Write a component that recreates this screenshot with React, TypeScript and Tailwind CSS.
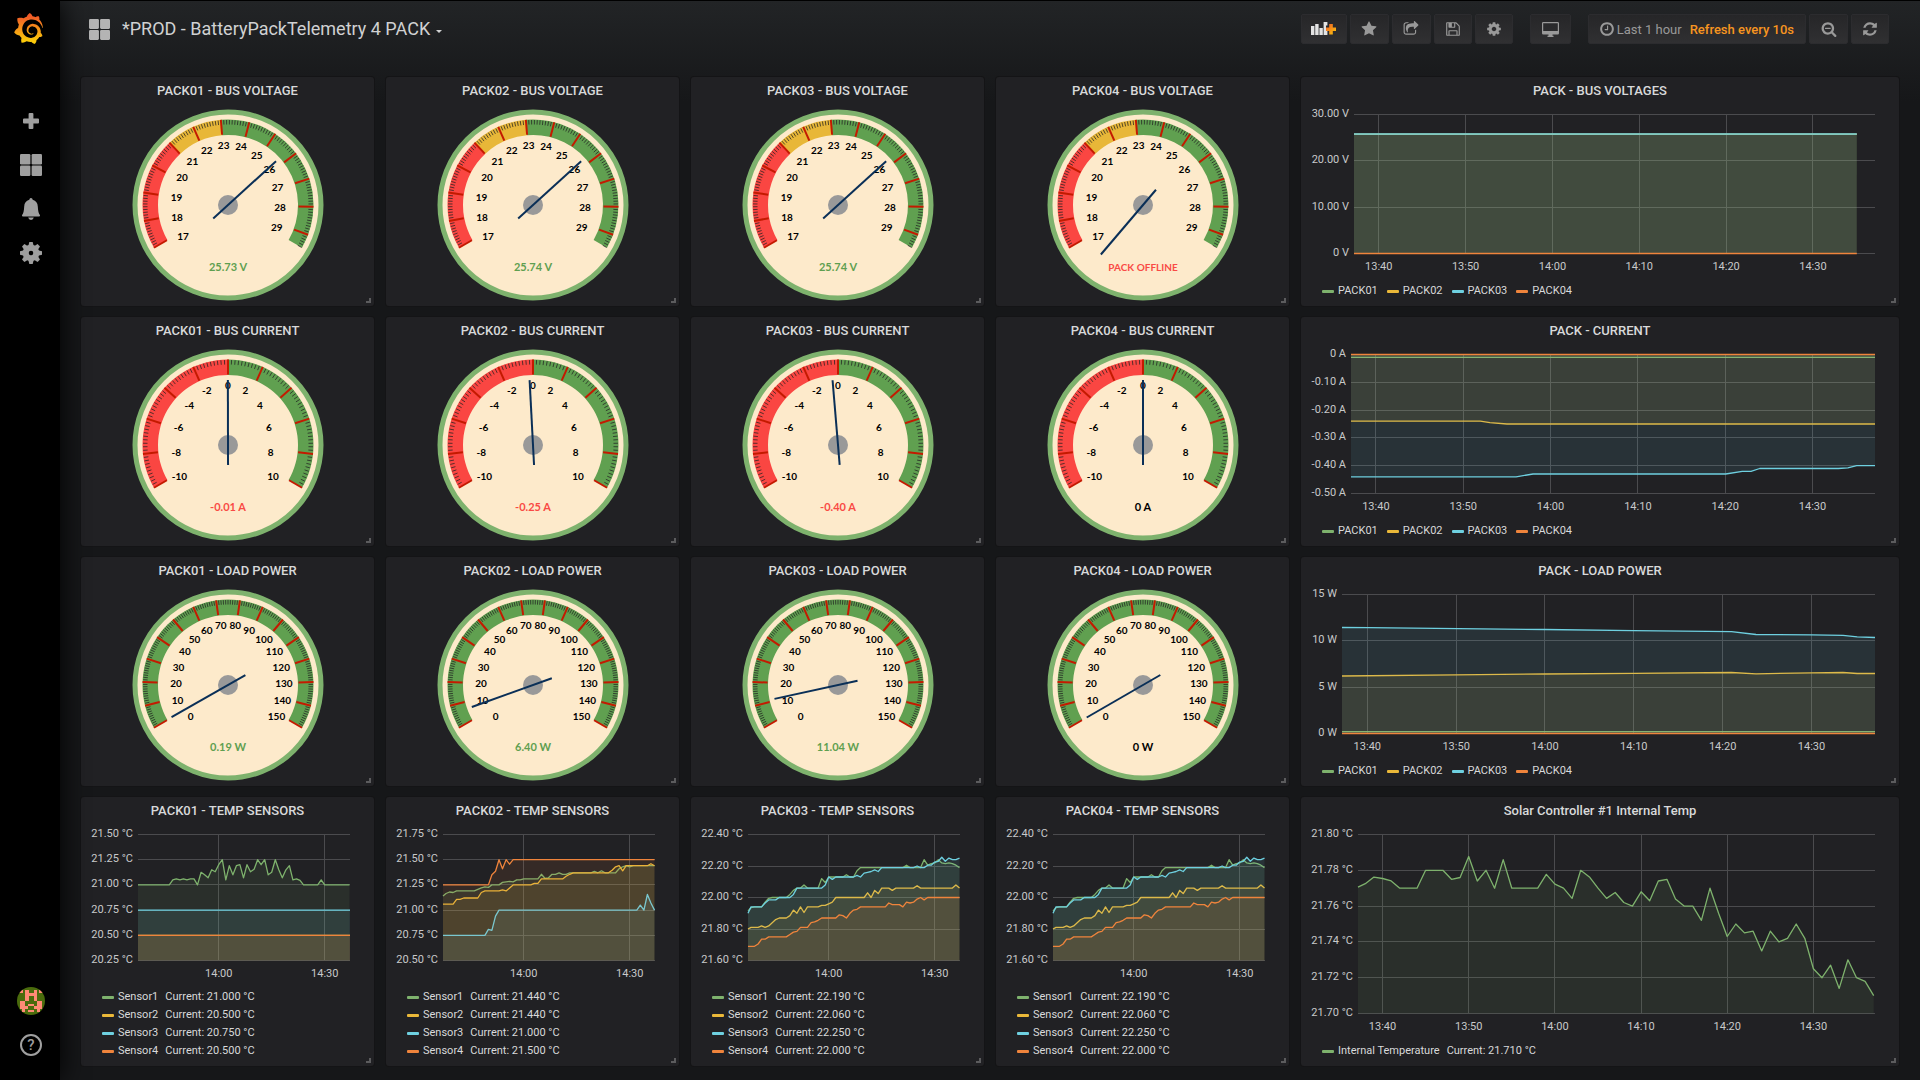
import React from "react";
import { SiGrafana } from "react-icons/si";

const GREEN = "#7eb26d";
const YELLOW = "#eab839";
const CYAN = "#6ed0e0";
const ORANGE = "#ef843c";
const COLORS = [GREEN, YELLOW, CYAN, ORANGE];

/* ---------- icons ---------- */

type IconProps = { className?: string };

const PATHS = {
  star: "M1728 647q0 22-26 48l-363 354 86 500q1 7 1 20 0 21-10.5 35.5t-30.5 14.5q-19 0-40-12l-449-236-449 236q-22 12-40 12-21 0-31.5-14.5t-10.5-35.5q0-6 2-20l86-500-364-354q-25-27-25-48 0-37 56-46l502-73 225-455q19-41 49-41t49 41l225 455 502 73q56 9 56 46z",
  share:
    "M1472 989v259q0 119-84.5 203.5t-203.5 84.5h-832q-119 0-203.5-84.5t-84.5-203.5v-832q0-119 84.5-203.5t203.5-84.5h255q13 0 22.5 9.5t9.5 22.5q0 27-26 32-77 26-133 60-10 4-16 4h-112q-66 0-113 47t-47 113v832q0 66 47 113t113 47h832q66 0 113-47t47-113v-214q0-19 18-29 28-13 54-37 16-16 35-8 21 9 21 29zm237-496l-384 384q-18 19-45 19-12 0-25-5-39-17-39-59v-192h-160q-323 0-438 131-119 137-74 473 3 23-20 34-8 2-12 2-16 0-26-13-10-14-21-31t-39.5-68.5-49.5-99.5-38.5-114-17.5-122q0-49 3.5-91t14-90 28-88 47-81.5 68.5-74 94.5-61.5 124.5-48.5 159.5-30.5 196.5-11h160v-192q0-42 39-59 13-5 25-5 26 0 45 19l384 384q19 19 19 45t-19 45z",
  save: "M512 1536h768v-384h-768v384zm896 0h128v-896q0-14-10-38.5t-20-34.5l-281-281q-10-10-34-20t-39-10v416q0 40-28 68t-68 28h-576q-40 0-68-28t-28-68v-416h-128v1280h128v-416q0-40 28-68t68-28h832q40 0 68 28t28 68v416zm-384-928v-320q0-13-9.5-22.5t-22.5-9.5h-192q-13 0-22.5 9.5t-9.5 22.5v320q0 13 9.5 22.5t22.5 9.5h192q13 0 22.5-9.5t9.5-22.5zm640 32v928q0 40-28 68t-68 28h-1344q-40 0-68-28t-28-68v-1344q0-40 28-68t68-28h928q40 0 88 20t76 48l280 280q28 28 48 76t20 88z",
  cog: "M1152 896q0-106-75-181t-181-75-181 75-75 181 75 181 181 75 181-75 75-181zm512-109v222q0 12-8 23t-20 13l-185 28q-19 54-39 91 35 50 107 138 10 12 10 25t-9 23q-27 37-99 108t-94 71q-12 0-26-9l-138-108q-44 23-91 38-16 136-29 186-7 28-36 28h-222q-14 0-24.5-8.5t-11.5-21.5l-28-184q-49-16-90-37l-141 107q-10 9-25 9-14 0-25-11-126-114-165-168-7-10-7-23 0-12 8-23 15-21 51-66.5t54-70.5q-27-50-41-99l-183-27q-13-2-21-12.5t-8-23.5v-222q0-12 8-23t19-13l186-28q14-46 39-92-40-57-107-138-10-12-10-24 0-10 9-23 26-36 98.5-107.5t94.5-71.5q13 0 26 10l138 107q44-23 91-38 16-136 29-186 7-28 36-28h222q14 0 24.5 8.5t11.5 21.5l28 184q49 16 90 37l142-107q9-9 24-9 13 0 25 10 129 119 165 170 7 8 7 22 0 12-8 23-15 21-51 66.5t-54 70.5q26 50 41 98l183 28q13 2 21 12.5t8 23.5z",
  clock:
    "M1024 544v448q0 14-9 23t-23 9h-320q-14 0-23-9t-9-23v-64q0-14 9-23t23-9h224v-352q0-14 9-23t23-9h64q14 0 23 9t9 23zm416 352q0-148-73-273t-198-198-273-73-273 73-198 198-73 273 73 273 198 198 273 73 273-73 198-198 73-273zm224 0q0 209-103 385.5t-279.5 279.5-385.5 103-385.5-103-279.5-279.5-103-385.5 103-385.5 279.5-279.5 385.5-103 385.5 103 279.5 279.5 103 385.5z",
  zoomOut:
    "M1088 800v64q0 13-9.5 22.5t-22.5 9.5h-576q-13 0-22.5-9.5t-9.5-22.5v-64q0-13 9.5-22.5t22.5-9.5h576q13 0 22.5 9.5t9.5 22.5zm128 32q0-185-131.5-316.5t-316.5-131.5-316.5 131.5-131.5 316.5 131.5 316.5 316.5 131.5 316.5-131.5 131.5-316.5zm512 832q0 53-37.5 90.5t-90.5 37.5q-54 0-90-38l-343-342q-179 124-399 124-143 0-273.5-55.5t-225-150-150-225-55.5-273.5 55.5-273.5 150-225 225-150 273.5-55.5 273.5 55.5 225 150 150 225 55.5 273.5q0 220-124 399l343 343q37 37 37 90z",
  refresh:
    "M1639 1056q0 5-1 7-64 268-268 434.5t-478 166.5q-146 0-282.5-55t-243.5-157l-129 129q-19 19-45 19t-45-19-19-45v-448q0-26 19-45t45-19h448q26 0 45 19t19 45-19 45l-137 137q71 66 161 102t187 36q134 0 250-65t186-179q11-17 53-117 8-23 30-23h192q13 0 22.5 9.5t9.5 22.5zm25-800v448q0 26-19 45t-45 19h-448q-26 0-45-19t-19-45 19-45l138-138q-148-137-349-137-134 0-250 65t-186 179q-11 17-53 117-8 23-30 23h-199q-13 0-22.5-9.5t-9.5-22.5v-7q65-268 270-434.5t480-166.5q146 0 284 55.5t245 156.5l130-129q19-19 45-19t45 19 19 45z",
};

function Glyph({ name, className }: { name: keyof typeof PATHS; className?: string }) {
  return (
    <svg viewBox="0 0 1792 1792" fill="currentColor" className={className} aria-hidden="true">
      <path d={PATHS[name]} />
    </svg>
  );
}

function Squares({ className }: IconProps) {
  return (
    <svg viewBox="0 0 22 22" fill="currentColor" className={className} aria-hidden="true">
      <rect x="0" y="0" width="10.4" height="10.4" rx="1.2" />
      <rect x="11.6" y="0" width="10.4" height="10.4" rx="1.2" />
      <rect x="0" y="11.6" width="10.4" height="10.4" rx="1.2" />
      <rect x="11.6" y="11.6" width="10.4" height="10.4" rx="1.2" />
    </svg>
  );
}

function Plus({ className }: IconProps) {
  return (
    <svg viewBox="0 0 16 16" fill="currentColor" className={className} aria-hidden="true">
      <path d="M6.6 0h2.8q1 0 1 1v4.6H15q1 0 1 1v2.8q0 1-1 1h-4.6V15q0 1-1 1H6.6q-1 0-1-1v-4.6H1q-1 0-1-1V6.6q0-1 1-1h4.6V1q0-1 1-1z" />
    </svg>
  );
}

function Bell({ className }: IconProps) {
  return (
    <svg viewBox="0 0 18 22" fill="currentColor" className={className} aria-hidden="true">
      <path d="M9 0q1.500 0 1.700 1.700C14 2.500 15.600 5 15.800 8.500c.2 4.500.9 7 2.100 8.600.3.700 0 1.400-.8 1.400H.9c-.8 0-1.100-.7-.8-1.400C1.300 15.500 2 13 2.200 8.500 2.400 5 4 2.500 7.300 1.700 7.500 0 9 0 9 0z" />
      <path d="M6.200 19.600h5.600Q11.300 22 9 22t-2.800-2.400z" />
    </svg>
  );
}

function Gear({ className }: IconProps) {
  const teeth = [0, 45, 90, 135, 180, 225, 270, 315];
  return (
    <svg viewBox="-11 -11 22 22" className={className} aria-hidden="true">
      {teeth.map((a) => (
        <path key={a} d="M-2.900 -6L-1.700 -11H1.700L2.900 -6z" fill="currentColor" transform={`rotate(${a})`} />
      ))}
      <circle r="5.300" fill="none" stroke="currentColor" strokeWidth="6" />
    </svg>
  );
}

function Monitor({ className }: IconProps) {
  return (
    <svg viewBox="0 0 17 15" fill="currentColor" className={className} aria-hidden="true">
      <path
        fillRule="evenodd"
        d="M1.300 0h14.400Q17 0 17 1.300v9.900q0 1.300-1.300 1.300H1.300Q0 12.500 0 11.200V1.300Q0 0 1.300 0zM1.200 1.200v7.800h14.600v-7.800z"
      />
      <path d="M6.500 12h4v1.800h1V15h-6v-1.200h1z" />
    </svg>
  );
}

function AddPanel({ className }: IconProps) {
  return (
    <svg viewBox="0 0 25 15" className={className} aria-hidden="true">
      <g fill="#e3e3e3">
        <rect x="0" y="4" width="3.400" height="9" />
        <rect x="4.200" y="2" width="3.400" height="11" />
        <rect x="8.400" y="6" width="3.400" height="7" />
        <path d="M12.600 0h3.800v3.600h-1.400v5.400h1.400V13h-3.800z" />
      </g>
      <path d="M18.200 2h3.600v3.400H25V9h-3.200v3.400h-3.600V9H15V5.400h3.200z" fill="url(#plusGradient)" />
      <defs>
        <linearGradient id="plusGradient" x1="0" y1="0" x2="1" y2="1">
          <stop offset="0" stopColor="#f05a28" />
          <stop offset="1" stopColor="#fbca0a" />
        </linearGradient>
      </defs>
    </svg>
  );
}

function Avatar() {
  return (
    <svg viewBox="0 0 28 28" className="size-7 rounded-full" aria-hidden="true">
      <rect width="28" height="28" fill="#4a6b0c" />
      <g fill="#ff8a75">
        <rect x="8" y="3" width="4" height="11" />
        <rect x="17" y="3" width="3" height="11" />
        <rect x="12" y="6" width="5" height="3" />
        <rect x="2" y="3" width="4" height="3" />
        <rect x="22" y="3" width="4" height="3" />
        <rect x="3" y="14" width="5" height="8" />
        <rect x="20" y="14" width="5" height="8" />
        <rect x="8" y="19" width="3" height="3" />
        <rect x="17" y="19" width="3" height="3" />
        <rect x="11" y="17" width="6" height="2" />
        <rect x="5" y="22" width="3" height="3" />
        <rect x="20" y="22" width="3" height="3" />
        <rect x="11" y="23" width="6" height="2" />
      </g>
    </svg>
  );
}

/* ---------- shell ---------- */

function SideItem({ label, children }: { label: string; children: React.ReactNode }) {
  return (
    <button type="button" aria-label={label} className="flex h-11 w-full items-center justify-center pl-0.5 text-[#9f9f9f]">
      {children}
    </button>
  );
}

function Sidebar() {
  return (
    <nav className="z-10 flex w-15 shrink-0 flex-col bg-black pb-[13px] shadow-[0_0_28px_#000]">
      <a href="#home" aria-label="Home" className="flex h-14 items-center justify-center pr-1">
        <svg width="0" height="0" className="absolute" aria-hidden="true">
          <linearGradient id="logoGradient" x1="0" y1="0" x2="0" y2="1">
            <stop offset="0.1" stopColor="#f05a28" />
            <stop offset="0.9" stopColor="#fbca0a" />
          </linearGradient>
        </svg>
        <SiGrafana size={31} fill="url(#logoGradient)" />
      </a>
      <div className="mt-[43px] flex flex-col">
        <SideItem label="Create"><Plus className="size-4" /></SideItem>
        <SideItem label="Dashboards"><Squares className="size-[22px]" /></SideItem>
        <SideItem label="Alerting"><Bell className="h-[22px] w-[18px]" /></SideItem>
        <SideItem label="Configuration"><Gear className="size-[22px]" /></SideItem>
      </div>
      <div className="mt-auto flex flex-col">
        <SideItem label="Profile"><Avatar /></SideItem>
        <SideItem label="Help">
          <span className="flex size-[22px] items-center justify-center rounded-full border-2 border-[#a0a0a0] font-[Roboto] text-[15px] leading-none font-medium">
            ?
          </span>
        </SideItem>
      </div>
    </nav>
  );
}

function NavButton({ label, className, children }: { label: string; className: string; children: React.ReactNode }) {
  return (
    <button
      type="button"
      aria-label={label}
      className={`flex h-[30px] items-center justify-center rounded-[2px] border border-[#2c2c2f] bg-linear-to-b from-[#262628] to-[#303032] text-[#999] ${className}`}
    >
      {children}
    </button>
  );
}

function Header() {
  return (
    <header className="flex h-14 items-center pr-[31px] pl-[29px]">
      <button type="button" className="flex items-center text-lg text-[#d0d1d2]">
        <Squares className="mr-3 size-[21px] text-[#b4b4b4]" />
        *PROD - BatteryPackTelemetry 4 PACK
        <span className="mt-1 ml-1.5 border-x-[3px] border-t-[3px] border-x-transparent border-t-[#d0d1d2]" />
      </button>
      <div className="ml-auto flex gap-[3px]">
        <NavButton label="Add panel" className="w-[46px]"><AddPanel className="h-[15px] w-[25px]" /></NavButton>
        <NavButton label="Mark as favorite" className="w-[39px]"><Glyph name="star" className="size-4" /></NavButton>
        <NavButton label="Share dashboard" className="w-[39px]"><Glyph name="share" className="size-4" /></NavButton>
        <NavButton label="Save dashboard" className="w-[38px]"><Glyph name="save" className="size-4" /></NavButton>
        <NavButton label="Settings" className="w-[38px]"><Glyph name="cog" className="size-4" /></NavButton>
        <NavButton label="Cycle view mode" className="mx-3.5 w-[41px]"><Monitor className="h-[15px] w-[17px]" /></NavButton>
        <NavButton label="Time range" className="pr-[11px] pl-2.5 text-[13px]">
          <Glyph name="clock" className="mr-0.5 size-4" />
          <span className="pt-0.5">Last 1 hour</span>
          <span className="pt-0.5 pl-2 font-medium text-[#f79520]">Refresh every 10s</span>
        </NavButton>
        <NavButton label="Zoom out" className="w-[39px]"><Glyph name="zoomOut" className="size-4" /></NavButton>
        <NavButton label="Refresh" className="w-[38px]"><Glyph name="refresh" className="size-4" /></NavButton>
      </div>
    </header>
  );
}

function Panel({ title, wide, children }: { title: string; wide?: boolean; children: React.ReactNode }) {
  return (
    <section
      className={`relative rounded-[3px] bg-[#212124] shadow-[0_0_0_1px_#141416] ${wide ? "col-span-2 pb-1.5" : "pb-px"}`}
    >
      <h2 className="h-7 text-center text-[13px] leading-7 font-medium text-[#d8d9da]">{title}</h2>
      {children}
      <span className="absolute right-[3px] bottom-[3px] size-[5px] border-r-2 border-b-2 border-[#5c5c5e]" />
    </section>
  );
}

/* ---------- gauge ---------- */

const polar = (r: number, deg: number): [number, number] => {
  const a = (deg * Math.PI) / 180;
  return [r * Math.sin(a), -r * Math.cos(a)];
};

function band(from: number, to: number, r0 = 70, r1 = 85.5) {
  const [ax, ay] = polar(r1, from);
  const [bx, by] = polar(r1, to);
  const [cx, cy] = polar(r0, to);
  const [dx, dy] = polar(r0, from);
  const large = to - from > 180 ? 1 : 0;
  return `M${ax} ${ay}A${r1} ${r1} 0 ${large} 1 ${bx} ${by}L${cx} ${cy}A${r0} ${r0} 0 ${large} 0 ${dx} ${dy}Z`;
}

type GaugeSpec = {
  min: number;
  max: number;
  step: number;
  zones: [number, number, string][];
};

const Z_RED = "#fa4642";
const Z_YELLOW = "#e8b738";
const Z_GREEN = "#60a050";

const VOLTAGE: GaugeSpec = {
  min: 17,
  max: 29.5,
  step: 1,
  zones: [[17, 21, Z_RED], [21, 23, Z_YELLOW], [23, 29.5, Z_GREEN]],
};
const CURRENT: GaugeSpec = { min: -10, max: 10, step: 2, zones: [[-10, 0, Z_RED], [0, 10, Z_GREEN]] };
const POWER: GaugeSpec = { min: 0, max: 150, step: 10, zones: [[0, 150, Z_GREEN]] };

/* labels sit closer to the hub the shorter they are */
const LABEL_RX = [0, 43, 52, 56];

function Gauge({ spec, value, text, color }: { spec: GaugeSpec; value: number; text: string; color: string }) {
  const angle = (v: number) => ((v - spec.min) / (spec.max - spec.min)) * 240 - 120;
  const majors: number[] = [];
  for (let v = spec.min; v <= spec.max; v += spec.step) majors.push(v);
  const minors: number[] = [];
  const count = Math.round(((spec.max - spec.min) / spec.step) * 10);
  for (let i = 0; i <= count; i++) if (i % 10) minors.push(spec.min + (i * spec.step) / 10);
  const [nx, ny] = polar(65, angle(value));
  const [tx, ty] = polar(-20, angle(value));

  return (
    <svg viewBox="-100 -100 200 200" className="mx-auto block h-[200px] w-[200px]" role="img" aria-label={text}>
      <circle r="93" fill="#fdeacb" stroke="#7eb26d" strokeWidth="5" />
      {spec.zones.map(([a, b, c]) => (
        <path key={a} d={band(angle(a), angle(b))} fill={c} />
      ))}
      {minors.map((v) => {
        const [x1, y1] = polar(80.5, angle(v));
        const [x2, y2] = polar(85, angle(v));
        return <line key={v} x1={x1} y1={y1} x2={x2} y2={y2} stroke="#222" strokeOpacity="0.75" strokeWidth="1" />;
      })}
      {majors.map((v) => {
        const [x1, y1] = polar(70.5, angle(v));
        const [x2, y2] = polar(85.5, angle(v));
        return <line key={v} x1={x1} y1={y1} x2={x2} y2={y2} stroke="#c41a00" strokeWidth="2" />;
      })}
      <g className="font-[Lato] text-[10px] font-bold" fill="#000" textAnchor="middle">
        {majors.map((v) => {
          const [sx, sy] = polar(1, angle(v));
          const label = String(v);
          return (
            <text key={v} x={sx * LABEL_RX[label.length]} y={sy * 61 + 4.5}>
              {label}
            </text>
          );
        })}
      </g>
      <circle r="10" fill="#999" />
      <line x1={tx} y1={ty} x2={nx} y2={ny} stroke="#0a2f57" strokeWidth="2" />
      <text
        y="66"
        textAnchor="middle"
        fill={color}
        className={`font-[Lato] font-bold ${text.length > 8 ? "text-[10px]" : "text-[11px]"}`}
      >
        {text}
      </text>
    </svg>
  );
}

/* ---------- charts ---------- */

type Pt = [number, number]; // minutes since the left edge, value

/* one sample a minute; the first minute is cut by the left edge */
const perMinute = (values: number[]): Pt[] => values.map((v, k) => [Math.max(0, k - 0.15), v]);
const rep = (v: number, n: number): number[] => Array.from({ length: n }, () => v);
const flat = (v: number, end = 60): Pt[] => [[0, v], [end, v]];

type ChartProps = {
  width: number;
  height: number;
  left: number;
  right: number;
  bottom: number;
  yMin: number;
  yMax: number;
  yTicks: string[]; // from top to bottom
  xTicks: [number, string][];
  series: Pt[][];
};

const PLOT_TOP = 9;

function Chart({ width, height, left, right, bottom, yMin, yMax, yTicks, xTicks, series }: ChartProps) {
  const X = (m: number) => left + (m / 60) * (right - left);
  const Y = (v: number) => bottom + 0.5 - ((v - yMin) / (yMax - yMin)) * (bottom - PLOT_TOP);
  const base = Y(Math.min(Math.max(0, yMin), yMax));
  return (
    <svg viewBox={`0 0 ${width} ${height}`} className="block h-auto w-full" role="img">
      <g stroke="#4b4b4e" strokeWidth="1">
        {yTicks.map((t, i) => {
          const y = Math.round(PLOT_TOP + (i / (yTicks.length - 1)) * (bottom - PLOT_TOP)) + 0.5;
          return <line key={t} x1={left} x2={right} y1={y} y2={y} />;
        })}
        {xTicks.map(([m, t]) => {
          const x = Math.floor(X(m)) + 0.5;
          return <line key={t} x1={x} x2={x} y1={PLOT_TOP} y2={bottom} />;
        })}
      </g>
      {series.map((pts, i) => {
        const line = pts.map(([m, v]) => `${X(m).toFixed(1)} ${Y(v).toFixed(1)}`).join("L");
        return (
          <g key={i}>
            <path d={`M${X(pts[0][0])} ${base}L${line}L${X(pts[pts.length - 1][0])} ${base}Z`} fill={COLORS[i]} fillOpacity="0.1" />
            <path d={`M${line}`} fill="none" stroke={COLORS[i]} strokeWidth="1.3" strokeLinejoin="round" />
          </g>
        );
      })}
      <g fill="#c8c9ca" className="text-[11px]">
        {yTicks.map((t, i) => (
          <text key={t} x={left - 5} y={PLOT_TOP + (i / (yTicks.length - 1)) * (bottom - PLOT_TOP) + 3} textAnchor="end">
            {t}
          </text>
        ))}
        {xTicks.map(([m, t]) => (
          <text key={t} x={X(m)} y={bottom + 17} textAnchor="middle">
            {t}
          </text>
        ))}
      </g>
    </svg>
  );
}

const SWATCH = ["bg-[#7eb26d]", "bg-[#eab839]", "bg-[#6ed0e0]", "bg-[#ef843c]"];

function Legend({ items, stacked }: { items: [string, string?][]; stacked?: boolean }) {
  return (
    <ul className={`flex pl-[21px] text-[11px] leading-[18px] text-[#d8d9da] ${stacked ? "flex-col" : "gap-[9px]"}`}>
      {items.map(([name, current], i) => (
        <li key={name} className="flex items-center whitespace-nowrap">
          <span className={`mr-1 h-[3px] w-3 rounded-[1px] ${SWATCH[i]}`} />
          {name}
          {current && <span className="pl-[7px]">Current: {current} °C</span>}
        </li>
      ))}
    </ul>
  );
}

const X_WIDE: [number, string][] = [
  [2.85, "13:40"], [12.85, "13:50"], [22.85, "14:00"], [32.85, "14:10"], [42.85, "14:20"], [52.85, "14:30"],
];
const X_NARROW: [number, string][] = [[22.85, "14:00"], [52.85, "14:30"]];
const PACK_NAMES: [string][] = [["PACK01"], ["PACK02"], ["PACK03"], ["PACK04"]];

const CURRENT_SERIES: Pt[][] = [
  flat(-0.01),
  [[0, -0.24], [14.8, -0.24], [15.9, -0.245], [17.85, -0.25], [60, -0.25]],
  [
    [0, -0.44], [18.9, -0.44], [20.85, -0.43], [42.9, -0.43], [44.8, -0.42], [45.8, -0.42],
    [46.8, -0.41], [55.8, -0.41], [56.9, -0.408], [57.9, -0.4], [60, -0.4],
  ],
  flat(0),
];

const POWER_SERIES: Pt[][] = [
  flat(0.2),
  [[0, 6.2], [12.8, 6.33], [22.85, 6.42], [32.85, 6.5], [43.85, 6.58], [46.6, 6.44], [52.9, 6.55], [56.4, 6.58], [58, 6.47], [60, 6.47]],
  [[0, 11.44], [3, 11.42], [22.85, 11.22], [32.85, 11.1], [43.85, 11], [46.6, 10.68], [52.9, 10.65], [56.4, 10.6], [58, 10.43], [60, 10.36]],
  flat(0),
];

const TEMP_1: Pt[][] = [
  perMinute([
    ...rep(21, 10), 21.05, 21.06, 21.05, 21.06, 21.05, 21.06, 21.06, 21, 21.125, 21.1, 21.07, 21.15, 21.13, 21.2, 21.25,
    21.05, 21.19, 21.1, 21.19, 21.2, 21.07, 21.2, 21.13, 21.155, 21.25, 21.2, 21.25, 21.1, 21.125, 21.25, 21.15, 21.07,
    21.15, 21.19, 21.05, 21.06, 21.045, ...rep(21, 5), 21.05, ...rep(21, 8),
  ]),
  flat(20.5),
  flat(20.75),
  flat(20.5),
];

const TEMP_2: Pt[][] = [
  perMinute([
    21.14, 21.165, 21.18, 21.175, ...rep(21.19, 6), 21.205, 21.22, 21.23, 21.225, ...rep(21.25, 3), 21.275, 21.28, 21.285,
    21.28, 21.3, 21.3, ...rep(21.31, 5), 21.355, 21.315, 21.32, 21.355, 21.355, 21.37, 21.355, 21.355, ...rep(21.37, 7),
    21.385, 21.37, 21.39, ...rep(21.37, 4), 21.41, 21.43, 21.44, 21.43, ...rep(21.44, 7),
  ]),
  perMinute([
    ...rep(21.06, 4), 21.107, 21.107, ...rep(21.12, 5), 21.175, ...rep(21.19, 5), 21.2, 21.19, 21.22, ...rep(21.25, 6),
    21.265, 21.265, ...rep(21.31, 7), 21.335, 21.355, ...rep(21.37, 11), 21.395, 21.43, 21.44, 21.39, ...rep(21.44, 7),
    21.46, 21.44,
  ]),
  perMinute([...rep(20.75, 13), 20.81, 20.8, 20.94, ...rep(21, 40), 21.05, 21, 21.155, 21.07, 21]),
  perMinute([...rep(21.25, 14), 21.35, 21.385, 21.5, 21.41, 21.5, 21.455, ...rep(21.5, 41)]),
];

const TEMP_3: Pt[][] = [
  perMinute([
    21.915, 21.935, ...rep(21.94, 3), 21.97, 21.995, ...rep(22, 5), 22.02, 22.045, 22.06, 22.06, 22.08, ...rep(22.06, 4),
    22.12, 22.095, ...rep(22.13, 5), 22.145, 22.13, 22.13, 22.17, ...rep(22.19, 13), 22.205, ...rep(22.19, 4), 22.24,
    22.205, 22.215, 22.22, 22.24, 22.22, 22.215, 22.22, 22.215, 22.205, 22.19,
  ]),
  perMinute([
    21.8, 21.81, 21.81, 21.81, 21.82, 21.81, 21.82, 21.84, 21.86, ...rep(21.87, 3), 21.885, 21.92, 21.9, 21.94, 21.905,
    ...rep(21.94, 4), 21.95, 21.95, 21.96, 21.97, ...rep(22, 9), 22.03, 22, 22.045, 22.025, ...rep(22.06, 3), 22.045,
    ...rep(22.06, 6), 22.075, ...rep(22.06, 10), 22.08, 22.06,
  ]),
  perMinute([
    21.9, ...rep(21.94, 4), 21.965, 21.985, 21.985, 21.985, ...rep(22, 4), 22.02, ...rep(22.06, 8), 22.08, 22.13, 22.115,
    ...rep(22.13, 6), 22.14, 22.13, 22.155, 22.16, 22.165, 22.175, 22.165, ...rep(22.19, 10), 22.2, 22.19, 22.19, 22.205,
    22.205, 22.225, 22.23, 22.255, 22.23, 22.25, 22.24, 22.24, 22.25,
  ]),
  perMinute([
    ...rep(21.69, 3), 21.705, 21.735, 21.735, ...rep(21.75, 6), 21.765, 21.78, 21.785, ...rep(21.81, 3), 21.84, 21.845,
    21.855, ...rep(21.87, 5), 21.89, 21.885, 21.87, 21.9, 21.92, 21.925, ...rep(21.94, 8), 21.965, 21.955, 21.955,
    21.955, 21.94, 21.97, 21.965, 21.97, 21.99, 22, 21.985, ...rep(22, 10),
  ]),
];

const SOLAR: Pt[][] = [
  perMinute([
    21.7706, 21.7725, 21.7762, 21.7754, 21.7741, ...rep(21.77, 3), ...rep(21.78, 3), 21.775, 21.776, 21.7877, 21.774,
    21.78, 21.77, 21.786, ...rep(21.77, 4), 21.7777, 21.7723, 21.77, 21.7643, 21.78, 21.7763, 21.77, 21.7643, 21.7676,
    21.762, 21.76, 21.768, 21.763, 21.774, 21.775, 21.764, 21.76, 21.76, 21.752, 21.77, 21.756, 21.743, 21.75, 21.745,
    21.746, 21.735, 21.746, 21.74, 21.742, 21.75, 21.742, 21.725, 21.72, 21.727, 21.714, 21.73, 21.72, 21.718, 21.71,
  ]),
];

type TempSpec = { yTicks: string[]; yMin: number; yMax: number; series: Pt[][]; current: string[] };
const TICKS_22 = ["22.40 °C", "22.20 °C", "22.00 °C", "21.80 °C", "21.60 °C"];
const CURRENT_22 = ["22.190", "22.060", "22.250", "22.000"];
const TEMPS: TempSpec[] = [
  {
    yTicks: ["21.50 °C", "21.25 °C", "21.00 °C", "20.75 °C", "20.50 °C", "20.25 °C"],
    yMin: 20.25, yMax: 21.5, series: TEMP_1, current: ["21.000", "20.500", "20.750", "20.500"],
  },
  {
    yTicks: ["21.75 °C", "21.50 °C", "21.25 °C", "21.00 °C", "20.75 °C", "20.50 °C"],
    yMin: 20.5, yMax: 21.75, series: TEMP_2, current: ["21.440", "21.440", "21.000", "21.500"],
  },
  { yTicks: TICKS_22, yMin: 21.6, yMax: 22.4, series: TEMP_3, current: CURRENT_22 },
  { yTicks: TICKS_22, yMin: 21.6, yMax: 22.4, series: TEMP_3, current: CURRENT_22 },
];

/* ---------- page ---------- */

const T_GREEN = "#5f9f50";
const T_RED = "#f94a45";

const VOLTS: [number, string, string][] = [
  [25.73, "25.73 V", T_GREEN], [25.74, "25.74 V", T_GREEN], [25.74, "25.74 V", T_GREEN], [15.98, "PACK OFFLINE", T_RED],
];
const AMPS: [number, string, string][] = [
  [-0.01, "-0.01 A", T_RED], [-0.25, "-0.25 A", T_RED], [-0.4, "-0.40 A", T_RED], [0, "0 A", "#000"],
];
const WATTS: [number, string, string][] = [
  [0.19, "0.19 W", T_GREEN], [6.4, "6.40 W", T_GREEN], [11.04, "11.04 W", T_GREEN], [0, "0 W", "#000"],
];

function GaugeRow({ name, spec, readings }: { name: string; spec: GaugeSpec; readings: [number, string, string][] }) {
  return (
    <>
      {readings.map(([value, text, color], i) => (
        <Panel key={i} title={`PACK0${i + 1} - ${name}`}>
          <Gauge spec={spec} value={value} text={text} color={color} />
        </Panel>
      ))}
    </>
  );
}

export default function App() {
  return (
    <div className="flex min-h-screen bg-[#161719] font-[Roboto,sans-serif] text-[#d8d9da]">
      <Sidebar />
      <main className="min-w-0 flex-1 border-t border-black bg-linear-to-b from-[#222426] to-[#161719] to-[100px]">
        <Header />
        <div className="grid grid-cols-6 gap-x-3 gap-y-[11px] px-[21px] pt-5 pb-3">
          <GaugeRow name="BUS VOLTAGE" spec={VOLTAGE} readings={VOLTS} />
          <Panel title="PACK - BUS VOLTAGES" wide>
            <Chart
              width={598} height={177} left={53} right={574} bottom={148} yMin={0} yMax={30}
              yTicks={["30.00 V", "20.00 V", "10.00 V", "0 V"]} xTicks={X_WIDE}
              series={[flat(25.7, 57.9), flat(25.74, 57.9), flat(25.8, 57.9), flat(0, 57.9)]}
            />
            <Legend items={PACK_NAMES} />
          </Panel>

          <GaugeRow name="BUS CURRENT" spec={CURRENT} readings={AMPS} />
          <Panel title="PACK - CURRENT" wide>
            <Chart
              width={598} height={177} left={50} right={574} bottom={148} yMin={-0.5} yMax={0}
              yTicks={["0 A", "-0.10 A", "-0.20 A", "-0.30 A", "-0.40 A", "-0.50 A"]} xTicks={X_WIDE}
              series={CURRENT_SERIES}
            />
            <Legend items={PACK_NAMES} />
          </Panel>

          <GaugeRow name="LOAD POWER" spec={POWER} readings={WATTS} />
          <Panel title="PACK - LOAD POWER" wide>
            <Chart
              width={598} height={177} left={41} right={574} bottom={148} yMin={0} yMax={15}
              yTicks={["15 W", "10 W", "5 W", "0 W"]} xTicks={X_WIDE} series={POWER_SERIES}
            />
            <Legend items={PACK_NAMES} />
          </Panel>

          {TEMPS.map((t, i) => (
            <Panel key={i} title={`PACK0${i + 1} - TEMP SENSORS`}>
              <Chart
                width={293} height={163} left={57} right={269} bottom={135} yMin={t.yMin} yMax={t.yMax}
                yTicks={t.yTicks} xTicks={X_NARROW} series={t.series}
              />
              <Legend stacked items={t.current.map((c, n): [string, string] => [`Sensor${n + 1}`, c])} />
            </Panel>
          ))}
          <Panel title="Solar Controller #1 Internal Temp" wide>
            <Chart
              width={598} height={217} left={57} right={574} bottom={188} yMin={21.7} yMax={21.8}
              yTicks={["21.80 °C", "21.78 °C", "21.76 °C", "21.74 °C", "21.72 °C", "21.70 °C"]} xTicks={X_WIDE}
              series={SOLAR}
            />
            <Legend items={[["Internal Temperature", "21.710"]]} />
          </Panel>
        </div>
      </main>
    </div>
  );
}
